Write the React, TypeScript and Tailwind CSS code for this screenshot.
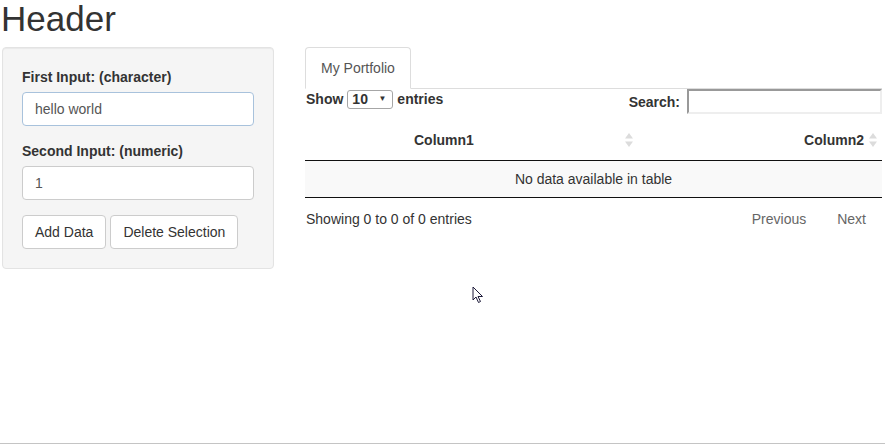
import React from "react";

function SortIcon() {
  return (
    <svg width="8" height="14" viewBox="0 0 8 14" className="shrink-0">
      <path d="M4 0 L8 5.5 L0 5.5 Z" fill="#dcdcdc" />
      <path d="M4 14 L8 8.5 L0 8.5 Z" fill="#dcdcdc" />
    </svg>
  );
}

function Cursor() {
  return (
    <svg
      width="14"
      height="18"
      viewBox="0 0 14 18"
      className="absolute left-[472px] top-[286px]"
    >
      <path
        d="M1 1 L1 14 L4 11 L6.5 16.5 L8.5 15.5 L6 10.5 L10.5 10.5 Z"
        fill="#ffffff"
        stroke="#1e1b3a"
        strokeWidth="1"
        strokeLinejoin="round"
      />
    </svg>
  );
}

export default function App() {
  const font = "font-['Liberation_Sans',Arial,sans-serif]";

  return (
    <div className={`relative h-[444px] w-[885px] overflow-hidden border-b border-[#c4c4c4] bg-white text-[14px] leading-[20px] text-[#333] ${font}`}>
      <h2 className="ml-[1px] h-[38px] text-[35px] leading-[38px] font-normal text-[#333]">Header</h2>

      <div className="mt-[9px] flex items-start">
        {/* sidebar */}
        <div className="ml-[2px] w-[272px] rounded-[4px] border border-[#e3e3e3] bg-[#f5f5f5] p-[19px] shadow-[inset_0_1px_1px_rgba(0,0,0,0.05)]">
          <div className="mb-[15px]">
            <label className="mb-[5px] block font-bold">First Input: (character)</label>
            <div className="h-[34px] w-[232px] rounded-[4px] border border-[#a8c2dc] bg-white px-[12px] py-[6px] text-[#555]">
              hello world
            </div>
          </div>
          <div className="mb-[15px]">
            <label className="mb-[5px] block font-bold">Second Input: (numeric)</label>
            <div className="h-[34px] w-[232px] rounded-[4px] border border-[#ccc] bg-white px-[12px] py-[6px] text-[#555]">
              1
            </div>
          </div>
          <div className="flex gap-[4px]">
            <button className="h-[34px] rounded-[4px] border border-[#ccc] bg-white px-[12px] text-[#333]">
              Add Data
            </button>
            <button className="h-[34px] rounded-[4px] border border-[#ccc] bg-white px-[12px] text-[#333]">
              Delete Selection
            </button>
          </div>
        </div>

        {/* main panel */}
        <div className="ml-[31px] w-[577px]">
          <div className="flex border-b border-[#ddd]">
            <div className="-mb-px rounded-t-[4px] border border-[#ddd] border-b-white bg-white px-[15px] py-[10px] text-[#555]">
              My Portfolio
            </div>
          </div>

          <div className="flex items-start justify-between">
            <div className="flex items-center pl-[1px] font-bold">
              <span>Show</span>
              <div className="mx-[4px] flex h-[19px] w-[46px] items-center justify-between rounded-[3px] border border-[#a6a6a6] bg-white pl-[4px] pr-[6px] text-[14px] leading-[17px]">
                <span>10</span>
                <span className="text-[8px] leading-[8px]">▼</span>
              </div>
              <span>entries</span>
            </div>
            <div className="flex items-center font-bold">
              <span className="mr-[7px] mt-[1px]">Search:</span>
              <div className="h-[25px] w-[195px] border-2 border-t-[#999] border-l-[#999] border-r-[#eee] border-b-[#eee] bg-white" />
            </div>
          </div>

          {/* table */}
          <div className="mt-[6px]">
            <div className="flex h-[41px] border-b border-[#111] font-bold">
              <div className="flex w-[333px] items-center justify-between">
                <span className="ml-[109px]">Column1</span>
                <span className="mr-[5px]"><SortIcon /></span>
              </div>
              <div className="flex flex-1 items-center justify-end">
                <span>Column2</span>
                <span className="ml-[5px] mr-[5px]"><SortIcon /></span>
              </div>
            </div>
            <div className="flex h-[37px] items-center justify-center border-b border-[#111] bg-[#f9f9f9]">
              No data available in table
            </div>
          </div>

          <div className="flex items-start justify-between pt-[11px]">
            <div className="pl-[1px]">Showing 0 to 0 of 0 entries</div>
            <div className="-mt-[1px] mr-[2px] flex text-[#666]">
              <span className="px-[14px] py-[1px]">Previous</span>
              <span className="ml-[3px] px-[14px] py-[1px]">Next</span>
            </div>
          </div>
        </div>
      </div>

      <Cursor />
    </div>
  );
}
